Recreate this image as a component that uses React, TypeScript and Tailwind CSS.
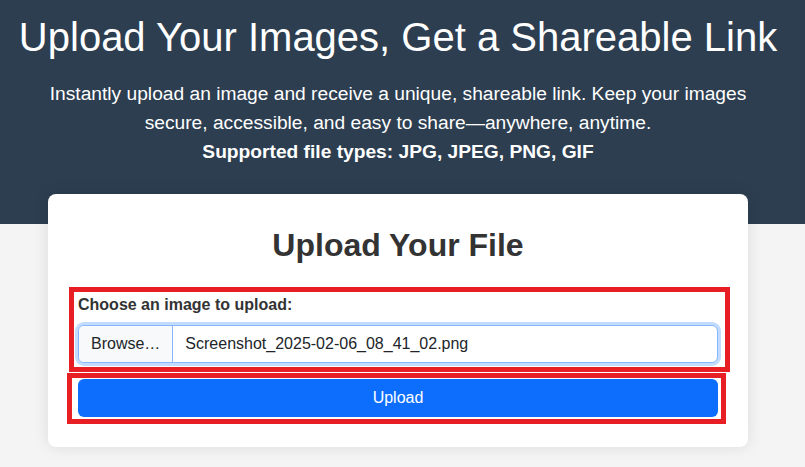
export default function App() {
  return (
    <div className="min-h-[467px] bg-[#f4f4f4] font-['Liberation_Sans',Arial,sans-serif]">
      <header className="bg-[#2c3e50] pt-[14px] pb-[58px] text-white">
        <div className="pr-[9px] text-center">
          <h1 className="text-[40px] leading-[46px] font-normal">
            Upload Your Images, Get a Shareable Link
          </h1>
          <p className="mx-auto mt-[20px] max-w-[700px] text-[19.2px] leading-[28.8px]">
            Instantly upload an image and receive a unique, shareable link. Keep your images
            secure, accessible, and easy to share—anywhere, anytime.
            <br />
            <strong className="font-bold">Supported file types: JPG, JPEG, PNG, GIF</strong>
          </p>
        </div>
      </header>

      <main className="pr-[9px]">
        <div className="relative mx-auto -mt-[30px] w-[700px] rounded-lg bg-white px-[30px] pt-[32px] pb-[30px] shadow-[0_0_15px_rgba(0,0,0,0.1)]">
          <h2 className="mb-[29px] text-center text-[32px] leading-[38px] font-bold text-[#333]">
            Upload Your File
          </h2>

          <form onSubmit={(e) => e.preventDefault()}>
            <label className="mb-2 block text-[16px] leading-[24px] font-bold text-[#333]">
              Choose an image to upload:
            </label>
            <div className="flex h-[38px] items-stretch overflow-hidden rounded-md border border-[#86b7fe] bg-white text-[16px] text-[#212529] shadow-[0_0_0_3px_rgba(13,110,253,0.25)]">
              <span className="flex items-center border-r border-[#86b7fe] bg-[#f8f9fa] px-3">
                Browse…
              </span>
              <span className="flex items-center px-3">Screenshot_2025-02-06_08_41_02.png</span>
            </div>

            <button
              type="submit"
              className="mt-4 block h-[38px] w-full rounded-md bg-[#0d6efd] text-[16px] text-white"
            >
              Upload
            </button>
          </form>

          {/* annotation boxes */}
          <div className="pointer-events-none absolute top-[93px] left-[21px] h-[85px] w-[661px] border-[5px] border-[#e81e25]" />
          <div className="pointer-events-none absolute top-[179px] left-[19px] h-[51px] w-[659px] border-[5px] border-[#e81e25]" />
        </div>
      </main>
    </div>
  )
}
